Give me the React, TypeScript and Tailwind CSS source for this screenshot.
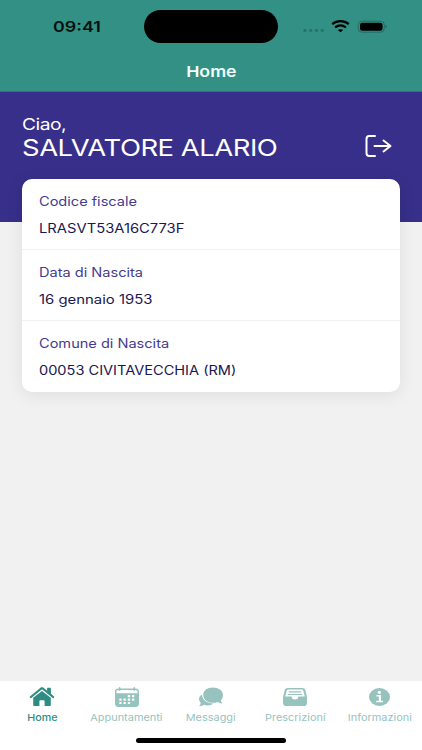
import React from "react";

type TextProps = { children: React.ReactNode; className?: string };

const T = ({ children, className = "" }: TextProps) => (
  <span className={`block w-max whitespace-nowrap ${className}`}>{children}</span>
);

const rows = [
  { label: "Codice fiscale", value: "LRASVT53A16C773F", valueScale: "scale-x-[1.18]" },
  { label: "Data di Nascita", value: "16 gennaio 1953", valueScale: "scale-x-[1.19]" },
  { label: "Comune di Nascita", value: "00053 CIVITAVECCHIA (RM)", valueScale: "scale-x-[1.165]" },
];

const HomeIcon = () => (
  <svg width="26" height="21" viewBox="0 0 26 22" preserveAspectRatio="none" fill="currentColor">
    <path d="M13 5.2 4.2 12.4V20c0 .6.4 1 1 1h5.2v-5.2c0-.5.4-.8.9-.8h3.4c.5 0 .9.3.9.8V21h5.2c.6 0 1-.4 1-1v-7.600Z" />
    <path d="m.9 11 10.900-9.300c.7-.6 1.700-.6 2.400 0l3.900 3.300V2.500c0-.4.3-.7.7-.7h2.400c.4 0 .7.300.7.700v5.600l3.200 2.900c.3.300.3.600.1.900l-.5.600c-.3.300-.7.300-1 .1L13 3.500 2.300 12.600c-.3.200-.7.200-1-.1l-.5-.6c-.2-.3-.2-.6.1-.9Z" />
  </svg>
);

const CalendarIcon = () => (
  <svg width="24" height="20" viewBox="0 0 24 20">
    <path d="M4.700.7v3M19.300.7v3" stroke="currentColor" strokeWidth="1.400" strokeLinecap="round" />
    <rect x="0" y="1.500" width="24" height="18.500" rx="3.400" fill="currentColor" />
    <path d="M1.400 6.300V4.700Q1.400 2.900 3.300 2.900h17.400q1.900 0 1.900 1.800v1.600Z" fill="#fff" />
    <path d="M4.700 2v1.300M19.300 2v1.300" stroke="currentColor" strokeWidth="1.600" strokeLinecap="round" />
    <g fill="#fff">
      <rect x="12.800" y="8.100" width="2.300" height="2.100" rx=".5" /><rect x="17" y="8.100" width="2.300" height="2.100" rx=".5" />
      <rect x="4.300" y="11.600" width="2.300" height="2.100" rx=".5" /><rect x="8.500" y="11.600" width="2.300" height="2.100" rx=".5" /><rect x="12.800" y="11.600" width="2.300" height="2.100" rx=".5" /><rect x="17" y="11.600" width="2.300" height="2.100" rx=".5" />
      <rect x="4.300" y="15" width="2.300" height="2.100" rx=".5" /><rect x="8.500" y="15" width="2.300" height="2.100" rx=".5" /><rect x="12.800" y="15" width="2.300" height="2.100" rx=".5" />
    </g>
  </svg>
);

const ChatIcon = () => (
  <svg width="24" height="20" viewBox="0 0 24 21" preserveAspectRatio="none" fill="currentColor">
    <path d="M3 8C1 9.300 0 10.900 0 12.700c0 1.600.7 3 1.800 4.200-.1 1.100-.6 2-1.400 2.800-.2.200 0 .500.300.5 1.700-.1 3.200-.7 4.400-1.500 3.400 1.200 7.200.6 9.500-1.400C8.500 17.600 3.200 14.300 3 8Z" />
    <path d="M13.800.4C8.300.4 4.200 3.700 4.200 8.300s4.100 8.300 9.600 8.300c1.800 0 3.500-.3 4.900-.9 1.200.9 2.700 1.400 4.200 1.500.5 0 .6-.3.300-.6-.8-.7-1.300-1.600-1.400-2.700C23.200 12.500 24 10.500 24 8.300 24 3.700 19.500.4 13.800.4Z" />
  </svg>
);

const TrayIcon = () => (
  <svg width="24" height="18" viewBox="0 0 24 18">
    <path d="M4.900 0h14.200c1.800 0 2.800.7 3.200 2.200L24 9v5.900c0 2-1.200 3.100-3.400 3.100H3.400C1.200 18 0 16.900 0 14.900V9l1.700-6.800C2.100.7 3.100 0 4.900 0Z" fill="currentColor" />
    <path d="M2.200 8.500 3.700 3c.3-1 .9-1.400 2-1.400h12.600c1.100 0 1.700.4 2 1.400l1.500 5.500h-5.700c-.7 0-1 .5-1 1.100 0 1.100-1.200 2-3.100 2s-3.100-.9-3.100-2c0-.6-.3-1.100-1-1.100Z" fill="#fff" />
    <path d="M6.200 3.800h11.600M5.300 6.500h13.400" stroke="currentColor" strokeWidth="1.200" strokeLinecap="round" />
  </svg>
);

const InfoIcon = () => (
  <svg width="21" height="18" viewBox="0 0 21 18">
    <ellipse cx="10.500" cy="9" rx="10.500" ry="9" fill="currentColor" />
    <ellipse cx="10.300" cy="4.500" rx="1.700" ry="1.400" fill="#fff" />
    <path d="M7.500 7.700h3.500v5.500M7.200 13.400h6.800" stroke="#fff" strokeWidth="1.500" fill="none" />
    <path d="M10.900 7v6.500" stroke="#fff" strokeWidth="2.200" />
  </svg>
);

const tabs = [
  { label: "Home", icon: <HomeIcon />, color: "text-[#2d8d82]", text: "font-medium scale-x-[1.130]" },
  { label: "Appuntamenti", icon: <CalendarIcon />, color: "text-[#97c3be]", text: "scale-x-[1.150]" },
  { label: "Messaggi", icon: <ChatIcon />, color: "text-[#97c3be]", text: "scale-x-[1.150]" },
  { label: "Prescrizioni", icon: <TrayIcon />, color: "text-[#97c3be]", text: "scale-x-[1.150]" },
  { label: "Informazioni", icon: <InfoIcon />, color: "text-[#97c3be]", text: "scale-x-[1.150]" },
];

export default function App() {
  return (
    <div className="flex h-[750px] w-[422px] flex-col overflow-hidden bg-[#f1f1f1] font-['Inter','Liberation_Sans',sans-serif]">
      <header className="h-[91px] shrink-0 bg-[#339085]">
        <div className="flex h-[53px] items-center">
          <div className="flex w-[144px] pt-[2px] pl-[53px]">
            <T className="origin-left scale-x-[1.19] text-[15px] font-semibold text-[#04110f]">09:41</T>
          </div>
          <div className="h-[33px] w-[134px] rounded-[17px] bg-black" />
          <div className="flex items-center pl-[25px]">
            <svg width="84" height="14" viewBox="0 0 84 14">
              <g fill="#26756c">
                <circle cx="2" cy="10.500" r="1.700" /><circle cx="7.700" cy="10.500" r="1.700" /><circle cx="13.500" cy="10.500" r="1.700" /><circle cx="19.200" cy="10.500" r="1.700" />
              </g>
              <g fill="none" stroke="#000" strokeWidth="2.200">
                <path d="M29.200 4.200c5-4.100 11.600-4.100 16.600 0M32.100 7.400c3.400-2.600 7.400-2.600 10.800 0" />
              </g>
              <path d="m37.500 12.300-2.700-2.200c1.400-1.300 4-1.300 5.400 0Z" />
              <rect x="55.300" y="1.200" width="26" height="11" rx="3.500" fill="none" stroke="#236c63" />
              <rect x="57" y="2.700" width="22.600" height="8" rx="2.300" />
              <path d="M82.500 5q1.400.4 1.400 1.700t-1.400 1.700Z" fill="#236c63" />
            </svg>
          </div>
        </div>
        <div className="flex h-[38px] items-center justify-center">
          <T className="scale-x-[1.180] text-[15px] font-semibold text-[#f2fffc]">Home</T>
        </div>
      </header>

      <section className="h-[130.500px] shrink-0 border-t border-[#47649a] bg-[#372f89] text-white">
        <div className="flex h-[88px] items-start justify-between pt-[22px] pl-[22px] pr-[30px]">
          <div>
            <T className="origin-left scale-x-[1.2] text-[16px] leading-[20px] tracking-[-0.4px]">Ciao,</T>
            <T className="mt-px origin-left scale-x-[1.195] text-[23px] leading-[26px] tracking-[-0.42px]">SALVATORE ALARIO</T>
          </div>
          <svg className="mt-[21px]" width="27" height="22" viewBox="0 0 27 22" fill="none" stroke="currentColor" strokeWidth="2" strokeLinecap="round" strokeLinejoin="round">
            <path d="M10 1H4.200Q1.500 1 1.500 4v14q0 3 2.700 3H10M9.500 11h15.500M18.500 5.500 25.500 11l-7 5.500" />
          </svg>
        </div>
      </section>

      <main className="relative z-10 mx-[22px] -mt-[42.300px] h-[213px] shrink-0 rounded-[10px] bg-white shadow-[0_3px_18px_rgba(0,0,0,0.08)]">
        {rows.map((row) => (
          <div key={row.label} className="h-[71px] border-b border-[#f1f1f1] pt-[11.500px] pl-[17px] last:border-0">
            <T className="origin-left scale-x-[1.165] text-[12.500px] leading-[22px] text-[#453b8e]">{row.label}</T>
            <T className={`mt-[5px] origin-left text-[12.500px] leading-[22px] text-[#20164f] ${row.valueScale}`}>{row.value}</T>
          </div>
        ))}
      </main>

      <nav className="mt-auto flex h-[69px] shrink-0 flex-col items-center bg-white">
        <div className="grid h-[57px] w-full grid-cols-5">
          {tabs.map((tab) => (
            <div key={tab.label} className={`flex flex-col items-center ${tab.color}`}>
              <div className="flex h-[31px] items-center">{tab.icon}</div>
              <T className={`text-[9.500px] leading-[12px] ${tab.text}`}>{tab.label}</T>
            </div>
          ))}
        </div>
        <div className="h-[4.500px] w-[150px] rounded-full bg-black" />
      </nav>
    </div>
  );
}
